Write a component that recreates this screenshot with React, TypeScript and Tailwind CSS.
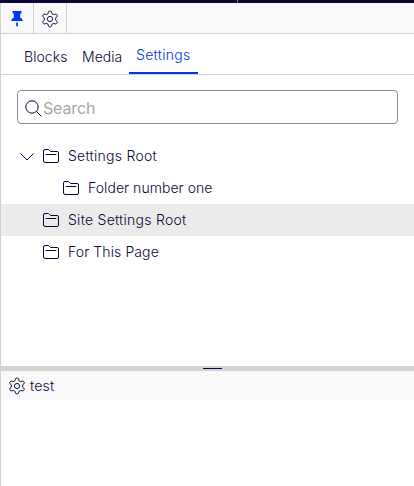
import React from 'react';

function Gear({ className = '' }: { className?: string }) {
  return (
    <svg viewBox="0 0 18 18" className={`h-[18px] w-[18px] shrink-0 ${className}`} fill="none" stroke="currentColor" strokeWidth="0.950" strokeLinejoin="round">
      <path transform="translate(-0.450 0.180) scale(1.050 0.980)" d="M7.500 2Q7.700 1 8.500 1h1q.8 0 1 1l.3 1.500 1.700 1 1.500-.5q.9-.3 1.300.4l.6 1q.4.7-.3 1.300l-1.200 1.100v2.400l1.200 1.100q.7.600.3 1.300l-.6 1q-.4.700-1.300.4l-1.500-.5-1.700 1-.3 1.500q-.2 1-1 1h-1q-.8 0-1-1l-.3-1.500-1.700-1-1.500.5q-.9.300-1.300-.4l-.6-1q-.4-.7.300-1.300l1.200-1.100V7.800L2.400 6.700q-.7-.6-.3-1.300l.6-1q.4-.7 1.300-.4l1.500.5 1.700-1z" />
      <circle cx="9" cy="9" r="2.600" />
    </svg>
  );
}

function Pin() {
  return (
    <svg viewBox="0 0 12 16" className="h-4 w-3" fill="#0037ff">
      <path d="M1.500 0h9v2.500H9.200v4.200c1.700.7 2.500 1.700 2.500 3.300H.3c0-1.600.8-2.600 2.500-3.300V2.500H1.500zM5.200 11.500h1.700v3.800H5.200z" />
    </svg>
  );
}

function Folder() {
  return (
    <svg viewBox="0 0 16 14" className="h-[14px] w-4 shrink-0" fill="none" stroke="currentColor" strokeWidth="1" strokeLinejoin="round" strokeLinecap="round">
      <path d="M.5 11.800V2Q.5.5 2 .5h3.600L7.600 2.500H14Q15.500 2.500 15.500 4v8q0 1.500-1.500 1.500H2Q.5 13.500.5 11.800zM3 5.500h10" />
    </svg>
  );
}

type RowProps = { label: string; child?: boolean; open?: boolean; selected?: boolean; tracking?: string };

function Row({ label, child, open, selected, tracking = 'tracking-[0.260px]' }: RowProps) {
  return (
    <div className={`flex h-8 items-center ${child ? 'pl-[62px]' : open ? 'pl-[19px]' : 'pl-[42px]'} ${selected ? 'bg-[#ebebeb]' : ''}`}>
      {open && (
        <svg viewBox="0 0 14 8" className="mr-[9px] mt-[2px] h-2 w-[14px] shrink-0" fill="none" stroke="currentColor" strokeWidth="1">
          <path d="M.5.5 7 7 13.500.5" />
        </svg>
      )}
      <Folder />
      <span className={`ml-[9px] whitespace-nowrap ${tracking}`}>{label}</span>
    </div>
  );
}

export default function App() {
  return (
    <div className="flex h-[486px] w-[414px] flex-col overflow-hidden bg-white font-['Inter',sans-serif] text-[14px] font-light leading-5 tracking-[0.2px] text-[#080736]">
      <header className="flex h-[3px] shrink-0 bg-[#080736]">
        <div className="w-[238px] border-r border-[#77769a]" />
      </header>
      <div className="flex min-h-0 flex-1 flex-col border-l border-[#d0d0d0]">
        <div className="flex h-[31px] shrink-0 border-b border-[#d0d0d0] bg-[#f9f9f9]">
          <button className="flex w-[33px] items-center justify-center border-r border-[#d0d0d0] pt-[2px]"><Pin /></button>
          <button className="flex w-[33px] items-center justify-center border-r border-[#d0d0d0] pt-[2px]"><Gear /></button>
        </div>
        <nav className="flex h-[41px] shrink-0 border-b border-[#d0d0d0] pl-[23px]">
          <span className="w-[58px] pt-[13px] tracking-[0.05px]">Blocks</span>
          <span className="w-[47px] pt-[13px] tracking-[0.05px]">Media</span>
          <span className="h-[40px] w-[69px] border-b-2 border-[#0037e0] pl-[7px] pt-[11px] tracking-[0.3px] text-[#0037e0]">Settings</span>
        </nav>
        <div className="ml-4 mt-[15px] flex h-[34px] w-[381px] shrink-0 items-center rounded-[4px] border border-[#8c8c8c] pl-[7px]">
          <svg viewBox="0 0 17 17" className="mt-[3px] h-[17px] w-[17px]" fill="none" stroke="currentColor" strokeWidth="1">
            <circle cx="7" cy="7" r="6.200" />
            <path d="m11.400 11.400 5 5" />
          </svg>
          <span className="ml-px mt-[2px] text-[16px] font-normal tracking-[-0.150px] text-[#a6a6a6]">Search</span>
        </div>
        <main className="mt-4 h-[226px] shrink-0">
          <Row label="Settings Root" open />
          <Row label="Folder number one" child tracking="tracking-[0.05px]" />
          <Row label="Site Settings Root" selected />
          <Row label="For This Page" tracking="tracking-[0.1px]" />
        </main>
        <div className="flex h-[5px] shrink-0 items-center bg-[#d3d3d3] pl-[202px]">
          <div className="h-px w-[19px] bg-[#080736]" />
        </div>
        <div className="flex h-[29px] shrink-0 items-center bg-[#f9f9f9] pl-[7px]">
          <Gear />
          <span className="ml-1">test</span>
        </div>
      </div>
    </div>
  );
}
